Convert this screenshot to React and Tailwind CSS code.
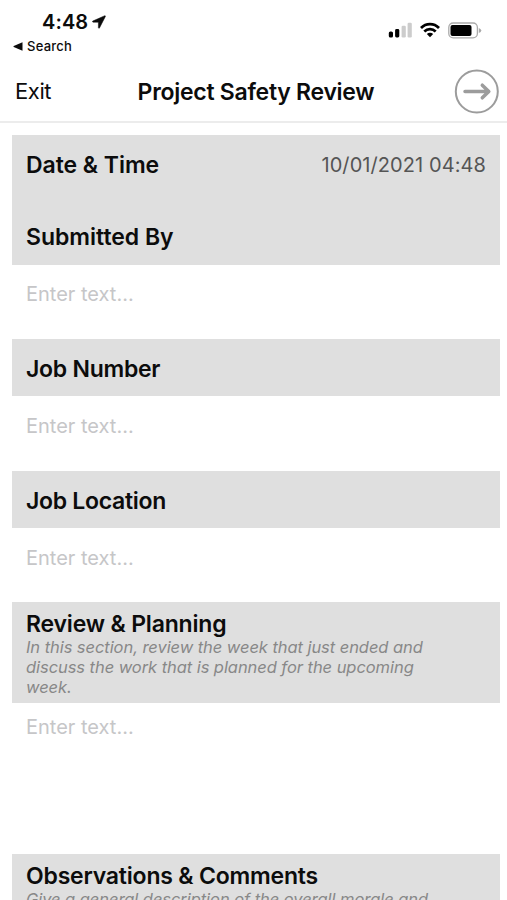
import React, { useState } from "react";

const fields = [
  { id: "submittedBy", label: "Submitted By", header: "h-[58px] pt-[17px]", input: "h-[74px]", inputBox: "h-[58px]", tracking: "tracking-[-0.02px]" },
  { id: "jobNumber", label: "Job Number", header: "h-[57px] pt-[17px]", input: "h-[75px]", inputBox: "h-[60px]", tracking: "tracking-[-0.26px]" },
  { id: "jobLocation", label: "Job Location", header: "h-[57px] pt-[17px]", input: "h-[74px]", inputBox: "h-[59px]", tracking: "tracking-[-0.3px]" },
  {
    id: "planning",
    label: "Review & Planning",
    hint: ["In this section, review the week that just ended and", "discuss the work that is planned for the upcoming", "week."],
    header: "h-[101px] pt-[9px]",
    input: "h-[151px]",
    inputBox: "h-[48px]",
    tracking: "tracking-[-0.18px]",
  },
  {
    id: "observations",
    label: "Observations & Comments",
    hint: ["Give a general description of the overall morale and"],
    header: "h-[101px] pt-[9px]",
    input: "h-[151px]",
    inputBox: "h-[48px]",
    tracking: "tracking-[-0.2px]",
  },
];

const StatusBar = () => (
  <div className="flex h-[61px] shrink-0 justify-between pl-[13px] pr-[25px]">
    <div className="pt-[10px]">
      <div className="flex items-center gap-1 pl-[29px]">
        <span className="text-[20px] font-semibold leading-6 tracking-[0.1px]">4:48</span>
        <svg width="14" height="14" viewBox="0 0 14 14">
          <path d="M12.8 0.7L0.7 6.1Q0.1 6.8 1 7.2H6.4V12.8Q6.8 13.8 7.5 12.9L13.4 1.4Q13.5 0.6 12.8 0.7Z" fill="currentColor" stroke="currentColor" strokeWidth="0.5" />
        </svg>
      </div>
      <div className="flex items-center gap-1 leading-6">
        <svg width="10" height="9" viewBox="0 0 10 9">
          <path d="M9.5 0.3V8.7L0.7 4.9Q0.2 4.5 0.7 4.1Z" fill="currentColor" />
        </svg>
        <span className="text-[13px] font-medium tracking-[0.25px]">Search</span>
      </div>
    </div>
    <div className="flex h-[60px] items-center gap-2">
      <svg width="24" height="16" viewBox="0 0 24 16">
        <rect x="0.8" y="9.5" width="4.2" height="6" rx="1.6" fill="#000" />
        <rect x="7.1" y="7" width="4.2" height="8.5" rx="1.4" fill="#000" />
        <rect x="13.6" y="3.8" width="4.2" height="11.7" rx="1.2" fill="#ccc" />
        <rect x="19.6" y="0.8" width="4.2" height="14.7" rx="1.2" fill="#ccc" />
      </svg>
      <svg width="20" height="16" viewBox="0 0 20 16" fill="none" stroke="#000" strokeWidth="2.7">
        <path d="M1 6C6 0.8 14 0.8 19 6" />
        <path d="M4.3 9.5C7.5 6.3 12.5 6.3 15.7 9.5" />
        <path d="M10 15.2L6.8 12C8.6 10.3 11.4 10.3 13.2 12Z" fill="#000" stroke="none" />
      </svg>
      <svg width="34" height="17" viewBox="0 0 34 17">
        <rect x="0.8" y="1" width="28.6" height="14.8" rx="4.4" fill="none" stroke="#aaa" strokeWidth="1.3" />
        <rect x="2.5" y="2.9" width="21" height="11" rx="2" fill="#000" />
        <path d="M30.8 5.9Q33.3 6.9 33.3 8.4T30.8 10.9Z" fill="#aaa" />
      </svg>
    </div>
  </div>
);

const NavBar = () => (
  <header className="grid h-[62px] shrink-0 grid-cols-[1fr_auto_1fr] items-center border-b-2 border-[#ececec] pl-[15px] pr-2">
    <button className="justify-self-start pt-px text-[22px] tracking-[-0.4px]">Exit</button>
    <h1 className="pr-0.5 pt-0.5 text-[23px] font-semibold tracking-[-0.27px]">Project Safety Review</h1>
    <button aria-label="Next" className="justify-self-end">
      <svg width="45" height="45" viewBox="0 0 45 45" fill="none" stroke="#9c9c9c">
        <circle cx="22.8" cy="22.5" r="21" strokeWidth="2" />
        <path d="M11 22.5H34M28.3 16.2L34.8 22.5L28.3 28.8" strokeWidth="3.5" strokeLinecap="round" strokeLinejoin="round" />
      </svg>
    </button>
  </header>
);

const Field = ({ field, value, onChange }) => (
  <section>
    <div className={`bg-[#dfdfdf] pl-[14px] ${field.header}`}>
      <h2 className={`text-[23px] font-semibold leading-[27px] ${field.tracking}`}>{field.label}</h2>
      {field.hint && (
        <p className="text-[16.5px] italic leading-[19.9px] tracking-[-0.06px] text-[#888]">
          {field.hint.map((line) => (
            <span key={line} className="block">{line}</span>
          ))}
        </p>
      )}
    </div>
    <div className={field.input}>
      <input
        className={`w-full bg-transparent px-[14px] text-[20px] outline-none placeholder:text-[#c6c6c8] ${field.inputBox}`}
        placeholder="Enter text..."
        value={value}
        onChange={(e) => onChange(field.id, e.target.value)}
      />
    </div>
  </section>
);

const App = () => {
  const [values, setValues] = useState({});

  const handleChange = (id, value) => {
    setValues({ ...values, [id]: value });
  };

  return (
    <div className="flex h-screen flex-col overflow-hidden bg-white font-['Inter','Liberation_Sans',sans-serif] text-[#0c0c0c]">
      <StatusBar />
      <NavBar />
      <main className="min-h-0 flex-1 overflow-hidden pl-3 pr-[7px] pt-3">
        <div className="h-[72px] bg-[#dfdfdf]">
          <div className="flex h-[60px] items-center justify-between px-[14px]">
            <h2 className="text-[23px] font-semibold tracking-[-0.05px]">Date & Time</h2>
            <span className="text-[20px] tracking-[0.08px] text-[#555]">10/01/2021 04:48</span>
          </div>
        </div>
        {fields.map((field) => (
          <Field key={field.id} field={field} value={values[field.id] || ""} onChange={handleChange} />
        ))}
      </main>
    </div>
  );
};

export default App;
